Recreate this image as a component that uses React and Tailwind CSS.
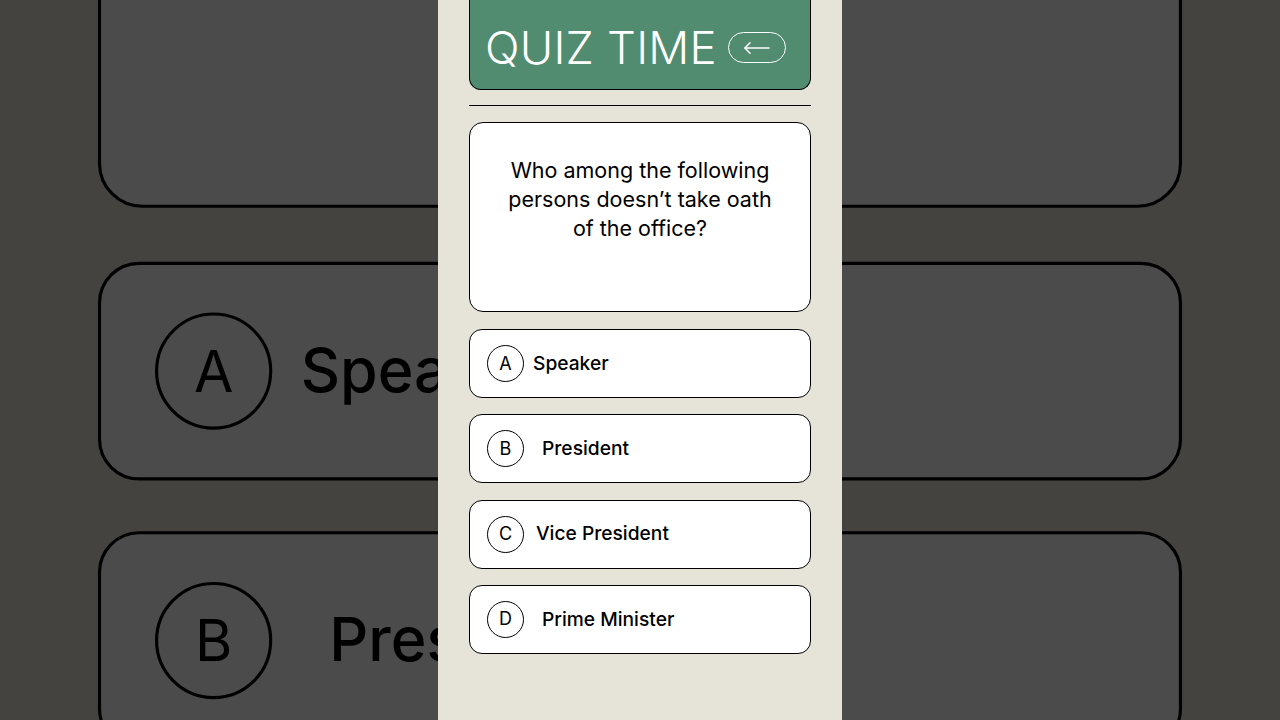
import React from "react";

const options = [
  { key: "A", label: "Speaker", gap: "ml-[9px]" },
  { key: "B", label: "President", gap: "ml-[18px]" },
  { key: "C", label: "Vice President", gap: "ml-[12px]" },
  { key: "D", label: "Prime Minister", gap: "ml-[18px]" },
];

function Panel() {
  return (
    <div className="w-[404px] h-[720px] bg-[#e6e3d9] px-[31px] flex flex-col font-['Inter',sans-serif] text-black">
      {/* header */}
      <div className="h-[90px] shrink-0 bg-[#518b70] border-x border-b border-black rounded-b-[12px] flex items-center pl-[15px] pt-[6px]">
        <span className="text-white text-[45.5px] font-[350] leading-none tracking-[0.2px]">QUIZ TIME</span>
        <span className="ml-[11px] w-[58px] h-[31px] rounded-full border-[1.5px] border-white flex items-center justify-center">
          <svg width="30" height="14" viewBox="0 0 30 14" fill="none" stroke="white" strokeWidth="1.6" strokeLinecap="round" strokeLinejoin="round">
            <path d="M27 7H3" />
            <path d="M8 1.8L3 7l5 5.2" />
          </svg>
        </span>
      </div>
      <div className="mt-[15px] h-px bg-black" />

      {/* question */}
      <div className="mt-[16px] h-[190px] shrink-0 bg-white border-[1.5px] border-black rounded-[14px] pt-[33px] text-center text-[21.5px] leading-[29px]">
        Who among the following
        <br />
        persons doesn’t take oath
        <br />
        of the office?
      </div>

      {/* options */}
      <div className="mt-[17px] flex flex-col gap-[16.3px]">
        {options.map((o) => (
          <div key={o.key} className="h-[69px] bg-white border-[1.5px] border-black rounded-[13px] flex items-center pl-[17px]">
            <span className="w-[37px] h-[37px] rounded-full border-[1.3px] border-black flex items-center justify-center text-[18px] leading-none">
              {o.key}
            </span>
            <span className={`${o.gap} text-[19.2px] font-[450] leading-none`}>{o.label}</span>
          </div>
        ))}
      </div>
    </div>
  );
}

export default function App() {
  return (
    <div className="relative w-[1280px] h-[720px] overflow-hidden bg-[#43433f]">
      {/* dimmed, enlarged backdrop of the same frame */}
      <div className="absolute inset-0 flex justify-center brightness-[0.294]">
        <div className="scale-[3.17] origin-[202px_360px]">
          <Panel />
        </div>
      </div>
      <div className="relative flex justify-center">
        <Panel />
      </div>
    </div>
  );
}
